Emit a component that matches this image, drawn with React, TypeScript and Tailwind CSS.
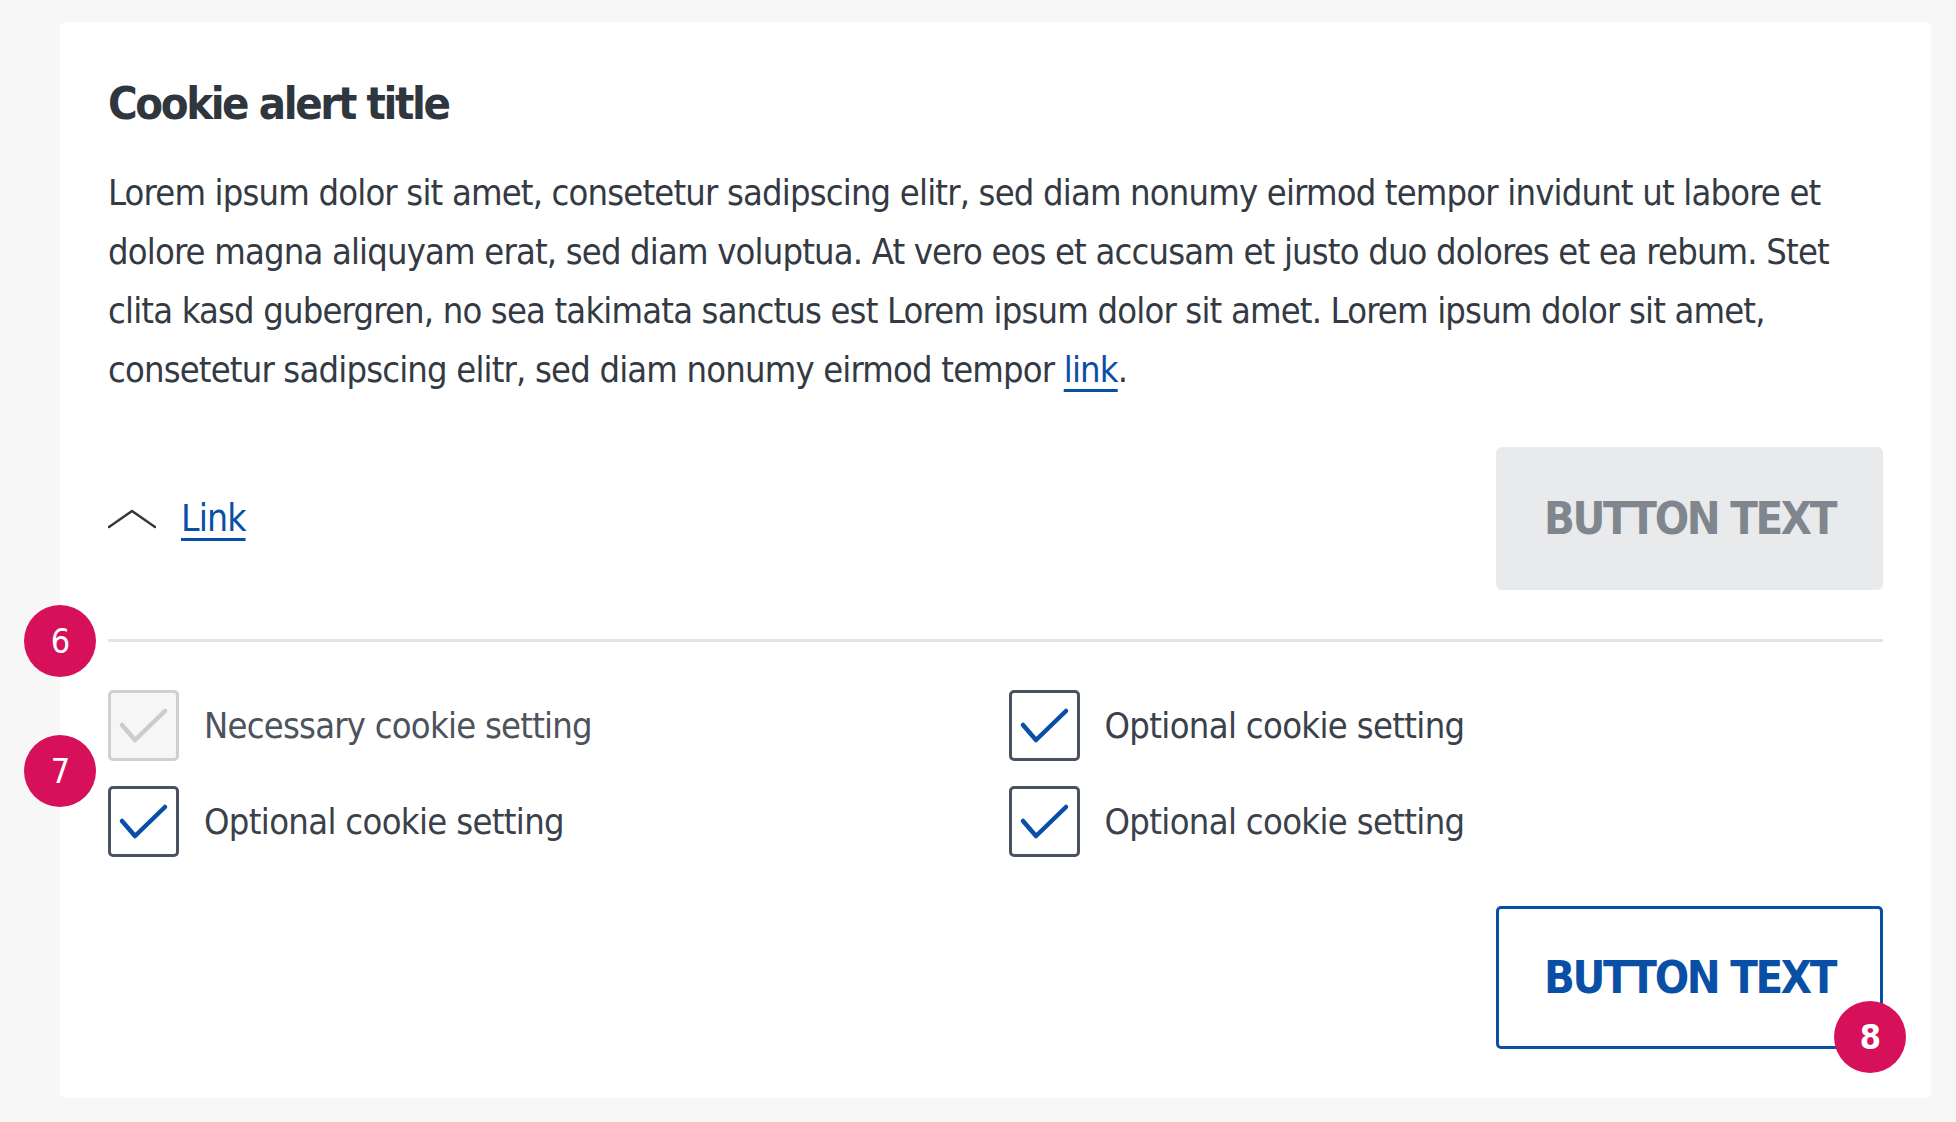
import React from 'react';

const FONT = "font-['DejaVu_Sans_Condensed','DejaVu_Sans',sans-serif]";

function Badge({ n, className }: { n: number; className: string }) {
  return (
    <span
      className={`absolute flex h-[72px] w-[72px] items-center justify-center rounded-full bg-[#d7105a] text-[34px] leading-none tracking-[-1px] text-white ${className}`}
    >
      {n}
    </span>
  );
}

function Checkbox({ label, disabled }: { label: string; disabled?: boolean }) {
  return (
    <label className="flex items-center gap-[25px]">
      <span
        className={
          disabled
            ? 'flex h-[71px] w-[71px] items-center justify-center rounded-[5px] border-[3px] border-[#cdd0d4] bg-[#f6f6f6]'
            : 'flex h-[71px] w-[71px] items-center justify-center rounded-[5px] border-[3px] border-[#4a5261] bg-white'
        }
      >
        <svg width="71" height="71" viewBox="0 0 71 71" fill="none" className="shrink-0">
          <path
            d="M14 35 L27 50 L57 21"
            stroke={disabled ? '#c9ccd0' : '#0a4fa6'}
            strokeWidth="4.5"
            strokeLinecap="round"
            strokeLinejoin="round"
          />
        </svg>
      </span>
      <span
        className={
          disabled
            ? 'text-[36px] tracking-[-0.75px] text-[#4c535c]'
            : 'text-[36px] tracking-[-0.65px] text-[#3a414b]'
        }
      >
        {label}
      </span>
    </label>
  );
}

export default function App() {
  return (
    <div className={`min-h-screen bg-[#f7f7f7] pt-[22px] pl-[60px] pr-[25px] pb-[24px] ${FONT}`}>
      <div className="relative rounded-[6px] bg-white px-[48px] pt-[51px] pb-[49px]">
        <h1 className="text-[45px] font-bold leading-[62px] tracking-[-2.4px] text-[#30363e]">Cookie alert title</h1>

        <p className="mt-[28px] text-[36px] leading-[59px] tracking-[-0.82px] text-[#343a43]">
          Lorem ipsum dolor sit amet, consetetur sadipscing elitr, sed diam nonumy eirmod tempor invidunt ut labore et
          <br />
          dolore magna aliquyam erat, sed diam voluptua. At vero eos et accusam et justo duo dolores et ea rebum. Stet
          <br />
          clita kasd gubergren, no sea takimata sanctus est Lorem ipsum dolor sit amet. Lorem ipsum dolor sit amet,
          <br />
          consetetur sadipscing elitr, sed diam nonumy eirmod tempor{' '}
          <a href="#" className="text-[#0a4fa6] underline decoration-[3px] underline-offset-[7px]">
            link
          </a>
          .
        </p>

        <div className="mt-[48px] flex items-center justify-between">
          <div className="flex items-center gap-[25px]">
            <svg width="48" height="20" viewBox="0 0 48 20" fill="none">
              <path d="M1 18 L24 2 L47 18" stroke="#33383f" strokeWidth="2.5" strokeLinecap="round" strokeLinejoin="round" />
            </svg>
            <a
              href="#"
              className="text-[37px] leading-none tracking-[-0.9px] text-[#0a4fa6] underline decoration-[3px] underline-offset-[7px]"
            >
              Link
            </a>
          </div>
          <button className="flex h-[143px] w-[387px] items-center justify-center rounded-[6px] bg-[#e9eaeb] text-[45px] font-bold tracking-[-2.3px] text-[#7f868e]">
            BUTTON TEXT
          </button>
        </div>

        <div className="relative mt-[49px] h-[3px] bg-[#e4e4e4]">
          <Badge n={6} className="left-[-84px] top-[-34px]" />
        </div>

        <div className="relative mt-[48px] grid grid-cols-2 gap-x-[26px] gap-y-[25px]">
          <Badge n={7} className="left-[-84px] top-[45px]" />
          <Checkbox label="Necessary cookie setting" disabled />
          <Checkbox label="Optional cookie setting" />
          <Checkbox label="Optional cookie setting" />
          <Checkbox label="Optional cookie setting" />
        </div>

        <div className="mt-[49px] flex justify-end">
          <button className="relative flex h-[143px] w-[387px] items-center justify-center rounded-[5px] border-[3px] border-[#0a4fa6] bg-white text-[45px] font-bold tracking-[-2.3px] text-[#0a4fa6]">
            BUTTON TEXT
            <Badge n={8} className="right-[-26px] bottom-[-27px]" />
          </button>
        </div>
      </div>
    </div>
  );
}
